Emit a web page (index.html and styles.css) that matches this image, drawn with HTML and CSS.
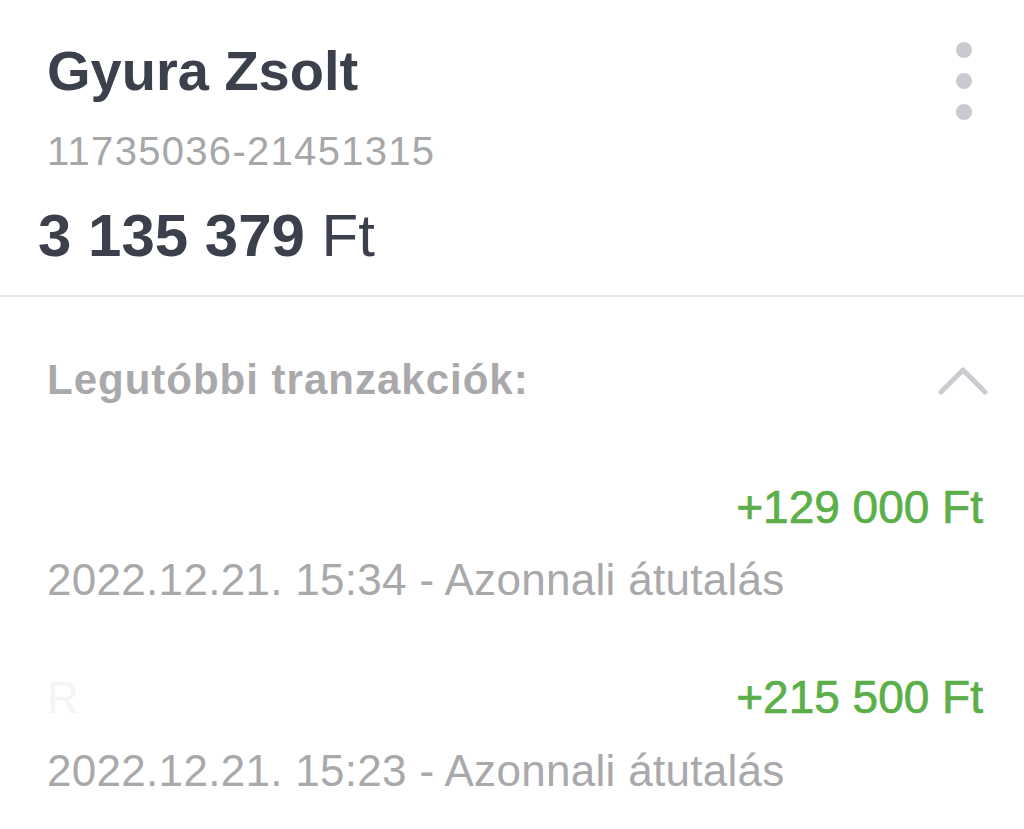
FILE: index.html
```html
<!DOCTYPE html>
<html lang="hu">
<head>
<meta charset="utf-8">
<title>Számla</title>
<link rel="stylesheet" href="styles.css">
</head>
<body>
<div class="page">
  <header class="account">
    <div class="info">
      <div class="name">Gyura Zsolt</div>
      <div class="number">11735036-21451315</div>
      <div class="balance"><b>3 135 379</b> Ft</div>
    </div>
    <div class="more" aria-label="Továbbiak">
      <span class="dot"></span>
      <span class="dot"></span>
      <span class="dot"></span>
    </div>
  </header>
  <section class="recent">
    <div class="recent-head">
      <div class="recent-title">Legutóbbi tranzakciók:</div>
      <svg class="chevron" width="50" height="32" viewBox="0 0 50 32">
        <path d="M3 28 L25 6 L47 28" fill="none" stroke="#cbcbd1" stroke-width="5" stroke-linecap="round" stroke-linejoin="round"/>
      </svg>
    </div>
    <ul class="tx-list">
      <li class="tx">
        <div class="tx-top">
          <span class="tx-name"></span>
          <span class="tx-amount">+129 000 Ft</span>
        </div>
        <div class="tx-meta">2022.12.21. 15:34 - Azonnali átutalás</div>
      </li>
      <li class="tx">
        <div class="tx-top">
          <span class="tx-name">R</span>
          <span class="tx-amount">+215 500 Ft</span>
        </div>
        <div class="tx-meta">2022.12.21. 15:23 - Azonnali átutalás</div>
      </li>
    </ul>
  </section>
</div>
</body>
</html>
```
FILE: styles.css
```css
html, body {
  margin: 0;
  padding: 0;
  background: #ffffff;
}

body {
  font-family: "Liberation Sans", Arial, sans-serif;
  color: #3b404c;
}

.page {
  width: 1024px;
  height: 829px;
  overflow: hidden;
}

.account {
  display: flex;
  justify-content: space-between;
  align-items: flex-start;
  height: 295px;
  padding: 0 52px 0 47px;
  border-bottom: 2px solid #e6e6e9;
  box-sizing: content-box;
}

.info {
  display: flex;
  flex-direction: column;
  padding-top: 43px;
}

.name {
  font-size: 56px;
  line-height: 56px;
  font-weight: 700;
  color: #3b404c;
}

.number {
  margin-top: 32px;
  font-size: 40px;
  line-height: 40px;
  letter-spacing: 1.3px;
  color: #a7a7a9;
}

.balance {
  margin-top: 35px;
  margin-left: -9px;
  font-size: 60px;
  line-height: 60px;
  color: #3b404c;
}

.balance b {
  font-weight: 700;
}

.more {
  display: flex;
  flex-direction: column;
  gap: 15px;
  margin-top: 42px;
}

.dot {
  display: block;
  width: 16px;
  height: 16px;
  border-radius: 50%;
  background: #c9c9d1;
}

.recent {
  padding: 0 37px 0 47px;
}

.recent-head {
  display: flex;
  justify-content: space-between;
  align-items: center;
  margin-top: 62px;
}

.recent-title {
  font-size: 42px;
  line-height: 42px;
  font-weight: 700;
  letter-spacing: 1px;
  color: #a9a9ab;
}

.chevron {
  display: block;
  margin-right: -1px;
}

.tx-list {
  list-style: none;
  margin: 0;
  padding: 0;
}

.tx {
  display: flex;
  flex-direction: column;
  padding-right: 4px;
}

.tx:first-child {
  margin-top: 83px;
}

.tx + .tx {
  margin-top: 72px;
}

.tx-top {
  display: flex;
  justify-content: space-between;
  align-items: baseline;
}

.tx-name {
  font-size: 44px;
  line-height: 46px;
  color: #f4f4f4;
}

.tx-amount {
  font-size: 46px;
  line-height: 46px;
  color: #5aaf48;
  -webkit-text-stroke: 0.7px #5aaf48;
}

.tx-meta {
  margin-top: 28px;
  font-size: 44px;
  line-height: 44px;
  letter-spacing: 0.3px;
  color: #a9a9ab;
}
```
